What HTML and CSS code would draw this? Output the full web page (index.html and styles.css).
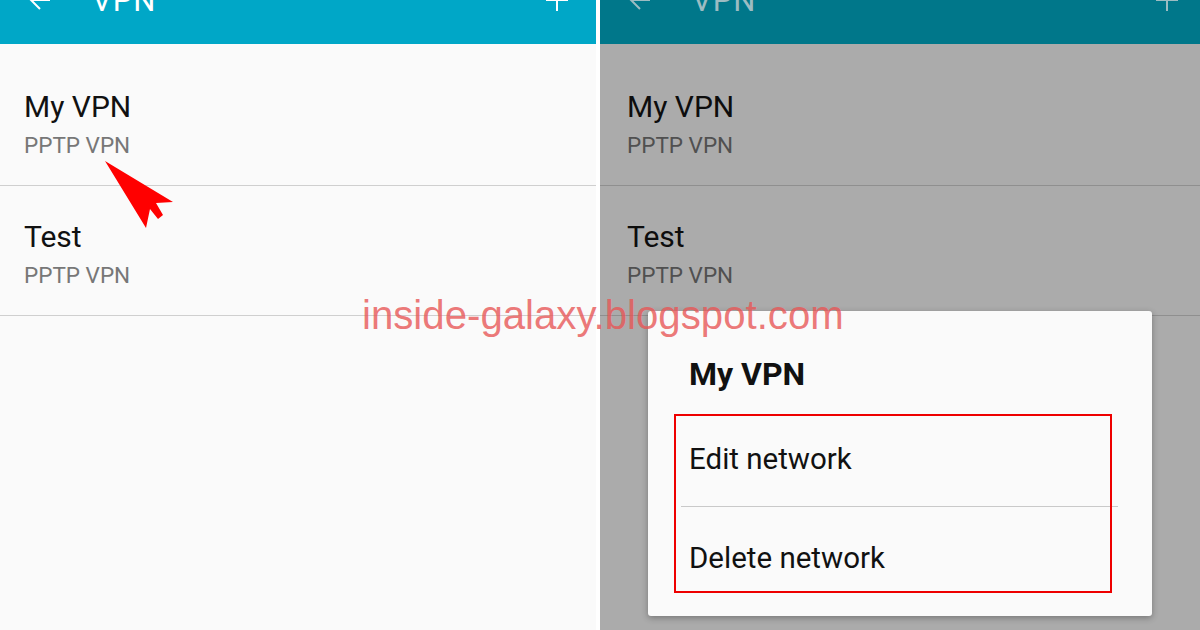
FILE: index.html
```html
<!DOCTYPE html>
<html>
<head>
<meta charset="utf-8">
<link rel="stylesheet" href="styles.css">
</head>
<body>
<div class="screen">
  <section class="panel panel-left">
    <header class="appbar">
      <div class="appbar-row">
        <svg class="back" width="24" height="24" viewBox="0 0 24 24"><path d="M22 12H3M12 3L3 12L12 21" fill="none" stroke="#fff" stroke-width="2"/></svg>
        <span class="appbar-title">VPN</span>
        <span class="spacer"></span>
        <svg class="plus" width="24" height="24" viewBox="0 0 24 24"><path d="M12 1V23M1 12H23" fill="none" stroke="#fff" stroke-width="2"/></svg>
      </div>
    </header>
    <ul class="list">
      <li class="item"><div class="item-title">My VPN</div><div class="item-sub">PPTP VPN</div></li>
      <li class="item"><div class="item-title">Test</div><div class="item-sub">PPTP VPN</div></li>
    </ul>
  </section>
  <section class="panel panel-right">
    <header class="appbar">
      <div class="appbar-row">
        <svg class="back" width="24" height="24" viewBox="0 0 24 24"><path d="M22 12H3M12 3L3 12L12 21" fill="none" stroke="#9cbcc2" stroke-width="2"/></svg>
        <span class="appbar-title">VPN</span>
        <span class="spacer"></span>
        <svg class="plus" width="24" height="24" viewBox="0 0 24 24"><path d="M12 1V23M1 12H23" fill="none" stroke="#9cbcc2" stroke-width="2"/></svg>
      </div>
    </header>
    <ul class="list">
      <li class="item"><div class="item-title">My VPN</div><div class="item-sub">PPTP VPN</div></li>
      <li class="item"><div class="item-title">Test</div><div class="item-sub">PPTP VPN</div></li>
    </ul>
    <div class="dialog">
      <div class="dialog-title">My VPN</div>
      <div class="dialog-options">
        <div class="option">Edit network</div>
        <div class="option">Delete network</div>
      </div>
      <div class="highlight"></div>
    </div>
  </section>
  <svg class="pointer" width="80" height="80" viewBox="0 0 80 80"><polygon points="4,1 72,42 55,43 62,55 57,59 49,49 45,68" fill="#ff0000"/></svg>
  <div class="watermark">inside-galaxy.blogspot.com</div>
</div>
</body>
</html>
```

FILE: styles.css
```css
* { box-sizing: border-box; }
html, body { margin: 0; padding: 0; }
body { width: 1200px; height: 630px; overflow: hidden; background: #fff; font-family: Roboto, "Noto Sans", sans-serif; }
.screen { position: relative; display: flex; gap: 4px; width: 1200px; height: 630px; background: #fff; }
.panel { position: relative; height: 630px; overflow: hidden; }
.panel-left { width: 596px; background: #fafafa; }
.panel-right { width: 600px; background: #ababab; }
.appbar { height: 44px; overflow: hidden; }
.panel-left .appbar { background: #00a7c7; color: #fff; }
.panel-right .appbar { background: #00778a; color: #9cbcc2; }
.appbar-row { display: flex; align-items: center; height: 56px; margin-top: -28px; padding: 0 28px 0 28px; }
.back { flex: none; }
.appbar-title { margin-left: 40px; font-size: 31px; letter-spacing: 1px; }
.spacer { flex: 1; }
.plus { flex: none; margin-right: -1px; }
.panel-right .plus { margin-right: -7px; }
.list { list-style: none; margin: 0; padding: 12px 0 0 0; }
.item { height: 130px; padding: 32px 24px 0 24px; border-bottom: 1px solid #cfcfcf; }
.item-title { font-size: 30px; line-height: 38px; color: #111; }
.item-sub { margin-top: 5px; font-size: 22.5px; line-height: 28px; color: #777; }
.panel-right .item { padding-left: 27px; border-bottom-color: #8f8f8f; }
.panel-right .item-title { color: #0d0d0d; }
.panel-right .item-sub { color: #505050; }
.dialog { position: absolute; left: 48px; top: 311px; width: 504px; height: 305px; background: #fafafa; border-radius: 3px; box-shadow: 0 2px 6px rgba(0,0,0,0.3); padding: 41px 34px 0 33px; }
.dialog-title { font-size: 32px; font-weight: bold; color: #111; line-height: 44px; padding-left: 8px; }
.dialog-options { margin-top: 15px; }
.option { height: 95px; display: flex; align-items: center; padding-left: 8px; font-size: 29.5px; color: #111; }
.option + .option { height: 102px; border-top: 1px solid #c9c9c9; }
.highlight { position: absolute; left: 26px; top: 103px; width: 438px; height: 179px; border: 2px solid #e00; }
.pointer { position: absolute; left: 101px; top: 160px; }
.watermark { position: absolute; left: 362px; top: 293px; font-family: "Liberation Sans", Arial, sans-serif; font-size: 40.2px; line-height: 46px; color: rgba(232, 86, 86, 0.8); white-space: nowrap; }
```
